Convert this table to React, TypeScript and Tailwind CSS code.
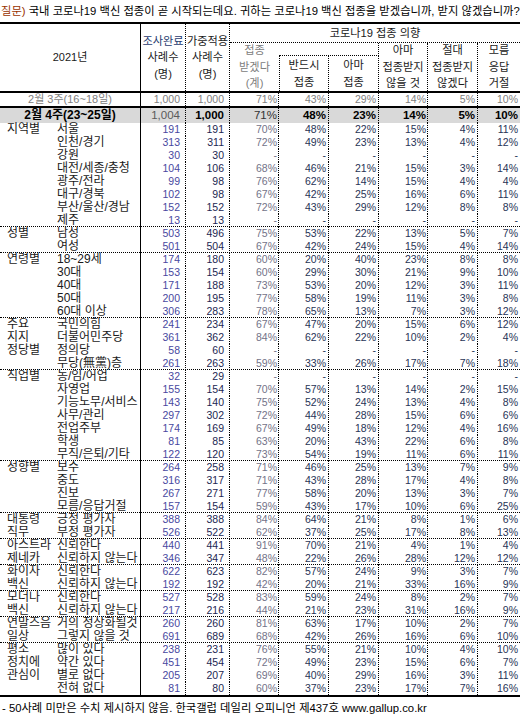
const COLS = "grid grid-cols-[141px_45px_44px_49px_50px_50px_49px_50px_42px]";

// [group label, item label, 조사완료, 가중적용, 계, 반드시, 아마, 아마않, 절대, 모름]
const groups: string[][][] = [
  [
    ["지역별", "서울", "191", "191", "70%", "48%", "22%", "15%", "4%", "11%"],
    ["", "인천/경기", "313", "311", "72%", "49%", "23%", "13%", "4%", "12%"],
    ["", "강원", "30", "30", "-", "-", "-", "-", "-", "-"],
    ["", "대전/세종/충청", "104", "106", "68%", "46%", "21%", "15%", "3%", "14%"],
    ["", "광주/전라", "99", "98", "76%", "62%", "14%", "15%", "4%", "4%"],
    ["", "대구/경북", "102", "98", "67%", "42%", "25%", "16%", "6%", "11%"],
    ["", "부산/울산/경남", "152", "152", "72%", "43%", "29%", "12%", "8%", "8%"],
    ["", "제주", "13", "13", "-", "-", "-", "-", "-", "-"],
  ],
  [
    ["성별", "남성", "503", "496", "75%", "53%", "22%", "13%", "5%", "7%"],
    ["", "여성", "501", "504", "67%", "42%", "24%", "15%", "4%", "14%"],
  ],
  [
    ["연령별", "18~29세", "174", "180", "60%", "20%", "40%", "23%", "8%", "8%"],
    ["", "30대", "153", "154", "60%", "29%", "30%", "21%", "9%", "10%"],
    ["", "40대", "171", "188", "73%", "53%", "20%", "12%", "3%", "11%"],
    ["", "50대", "200", "195", "77%", "58%", "19%", "11%", "3%", "8%"],
    ["", "60대 이상", "306", "283", "78%", "65%", "13%", "7%", "3%", "12%"],
  ],
  [
    ["주요", "국민의힘", "241", "234", "67%", "47%", "20%", "15%", "6%", "12%"],
    ["지지", "더불어민주당", "361", "362", "84%", "62%", "22%", "10%", "2%", "4%"],
    ["정당별", "정의당", "58", "60", "-", "-", "-", "-", "-", "-"],
    ["", "무당(無黨)층", "261", "263", "59%", "33%", "26%", "17%", "7%", "18%"],
  ],
  [
    ["직업별", "농/임/어업", "32", "29", "-", "-", "-", "-", "-", "-"],
    ["", "자영업", "155", "154", "70%", "57%", "13%", "14%", "2%", "15%"],
    ["", "기능노무/서비스", "143", "140", "75%", "52%", "24%", "13%", "4%", "8%"],
    ["", "사무/관리", "297", "302", "72%", "44%", "28%", "15%", "6%", "6%"],
    ["", "전업주부", "174", "169", "67%", "49%", "18%", "12%", "4%", "16%"],
    ["", "학생", "81", "85", "63%", "20%", "43%", "22%", "6%", "8%"],
    ["", "무직/은퇴/기타", "122", "120", "73%", "54%", "19%", "11%", "6%", "11%"],
  ],
  [
    ["성향별", "보수", "264", "258", "71%", "46%", "25%", "13%", "7%", "9%"],
    ["", "중도", "316", "317", "71%", "43%", "28%", "17%", "4%", "8%"],
    ["", "진보", "267", "271", "77%", "58%", "20%", "13%", "3%", "7%"],
    ["", "모름/응답거절", "157", "154", "59%", "43%", "17%", "10%", "6%", "25%"],
  ],
  [
    ["대통령", "긍정 평가자", "388", "388", "84%", "64%", "21%", "8%", "1%", "6%"],
    ["직무", "부정 평가자", "526", "522", "62%", "37%", "25%", "17%", "8%", "13%"],
  ],
  [
    ["아스트라", "신뢰한다", "440", "441", "91%", "70%", "21%", "4%", "1%", "4%"],
    ["제네카", "신뢰하지 않는다", "346", "347", "48%", "22%", "26%", "28%", "12%", "12%"],
  ],
  [
    ["화이자", "신뢰한다", "622", "623", "82%", "57%", "24%", "9%", "3%", "7%"],
    ["백신", "신뢰하지 않는다", "192", "192", "42%", "20%", "21%", "33%", "16%", "9%"],
  ],
  [
    ["모더나", "신뢰한다", "527", "528", "83%", "59%", "24%", "8%", "2%", "7%"],
    ["백신", "신뢰하지 않는다", "217", "216", "44%", "21%", "23%", "31%", "16%", "9%"],
  ],
  [
    ["연말즈음", "거의 정상화될것", "260", "260", "81%", "63%", "17%", "10%", "2%", "7%"],
    ["일상", "그렇지 않을 것", "691", "689", "68%", "42%", "26%", "16%", "6%", "10%"],
  ],
  [
    ["평소", "많이 있다", "238", "231", "76%", "55%", "21%", "10%", "4%", "10%"],
    ["정치에", "약간 있다", "451", "454", "72%", "49%", "23%", "15%", "6%", "7%"],
    ["관심이", "별로 없다", "205", "207", "69%", "40%", "29%", "16%", "3%", "11%"],
    ["", "전혀 없다", "81", "80", "60%", "37%", "23%", "17%", "7%", "16%"],
  ],
];

const DOT = "border-r border-dotted border-black";

function DataRow({ r, sep }: { r: string[]; sep: boolean }) {
  const [g, label, n1, n2, ...v] = r;
  return (
    <div className={`${COLS} h-[13px] text-[10.5px] leading-[13px] ${sep ? "border-b border-dotted border-black" : ""}`}>
      <div className="flex border-r border-black text-[12px] text-[#1a1a1a]">
        <span className="w-[57px] shrink-0 whitespace-nowrap pl-[7px]">{g}</span>
        <span className="whitespace-nowrap">{label}</span>
      </div>
      <div className={`${DOT} pr-[5px] text-right text-[#4848a0]`}>{n1}</div>
      <div className={`${DOT} pr-[5px] text-right text-[#1c2752]`}>{n2}</div>
      <div className={`${DOT} pr-[1px] text-right text-[#737388]`}>{v[0]}</div>
      <div className={`${DOT} pr-[2px] text-right text-[#283456]`}>{v[1]}</div>
      <div className={`${DOT} pr-[2px] text-right text-[#283456]`}>{v[2]}</div>
      <div className={`${DOT} pr-[1px] text-right text-[#283456]`}>{v[3]}</div>
      <div className={`${DOT} pr-[2px] text-right text-[#283456]`}>{v[4]}</div>
      <div className="pr-[2px] text-right text-[#283456]">{v[5]}</div>
    </div>
  );
}

function Header() {
  const cell = "flex flex-col items-center justify-center leading-[16.5px]";
  return (
    <div className={`${COLS} grid-rows-[19px_13px_35px] border-b-2 border-black text-[11.2px] text-[#1a1a1a]`}>
      <div className={`${cell} col-start-1 row-span-3 row-start-1 border-r border-black text-[11px]`}>2021년</div>
      <div className={`${cell} col-start-2 row-span-3 row-start-1 ${DOT}`}>
        <span className="text-[#1f3b6f]">조사완료</span>
        <span>사례수</span>
        <span>(명)</span>
      </div>
      <div className={`${cell} col-start-3 row-span-3 row-start-1 ${DOT}`}>
        <span>가중적용</span>
        <span>사례수</span>
        <span>(명)</span>
      </div>
      <div className={`${cell} col-span-6 col-start-4 row-start-1 border-b border-dotted border-black`}>
        코로나19 접종 의향
      </div>
      <div className={`${cell} col-start-4 row-span-2 row-start-2 text-[#808080]`}>
        <span>접종</span>
        <span>받겠다</span>
        <span>(계)</span>
      </div>
      <div className="col-span-2 col-start-5 row-start-2 border-r border-b border-dotted border-black" />
      <div className={`${cell} col-start-5 row-start-3 border-l ${DOT}`}>
        <span>반드시</span>
        <span>접종</span>
      </div>
      <div className={`${cell} col-start-6 row-start-3 ${DOT}`}>
        <span>아마</span>
        <span>접종</span>
      </div>
      <div className={`${cell} col-start-7 row-span-2 row-start-2 ${DOT}`}>
        <span>아마</span>
        <span>접종받지</span>
        <span>않을 것</span>
      </div>
      <div className={`${cell} col-start-8 row-span-2 row-start-2 ${DOT}`}>
        <span>절대</span>
        <span>접종받지</span>
        <span>않겠다</span>
      </div>
      <div className={`${cell} col-start-9 row-span-2 row-start-2`}>
        <span>모름</span>
        <span>응답</span>
        <span>거절</span>
      </div>
    </div>
  );
}

export default function App() {
  return (
    <div className="min-h-[717px] w-[525px] bg-white font-['Liberation_Sans','Noto_Sans_CJK_KR',sans-serif] text-black">
      <div className="h-[22px] whitespace-nowrap pl-[1px] pt-[3px] text-[11.3px] leading-[16px]">
        <span className="text-[#993300]">질문)</span> 국내 코로나19 백신 접종이 곧 시작되는데요. 귀하는 코로나19 백신 접종을
        받겠습니까, 받지 않겠습니까?
      </div>

      <div className="w-[520px] border-t-2 border-b-2 border-black">
        <Header />

        <div className={`${COLS} h-[15px] border-b-2 border-black text-[10.5px] leading-[13px] text-[#808080]`}>
          <div className="border-r border-black text-center text-[11px]">2월 3주(16~18일)</div>
          <div className={`${DOT} pr-[5px] text-right`}>1,000</div>
          <div className={`${DOT} pr-[5px] text-right`}>1,000</div>
          <div className={`${DOT} pr-[1px] text-right`}>71%</div>
          <div className={`${DOT} pr-[2px] text-right`}>43%</div>
          <div className={`${DOT} pr-[2px] text-right`}>29%</div>
          <div className={`${DOT} pr-[1px] text-right`}>14%</div>
          <div className={`${DOT} pr-[2px] text-right`}>5%</div>
          <div className="pr-[2px] text-right">10%</div>
        </div>

        <div className={`${COLS} h-[15px] bg-[#d9d9d9] text-[11.5px] leading-[15px] text-black`}>
          <div className="border-r border-black text-center text-[12px] font-bold">2월 4주(23~25일)</div>
          <div className={`${DOT} pr-[5px] text-right text-[#5a5a5a]`}>1,004</div>
          <div className={`${DOT} pr-[5px] text-right font-bold`}>1,000</div>
          <div className={`${DOT} pr-[1px] text-right text-[#333]`}>71%</div>
          <div className={`${DOT} pr-[2px] text-right font-bold`}>48%</div>
          <div className={`${DOT} pr-[2px] text-right font-bold`}>23%</div>
          <div className={`${DOT} pr-[1px] text-right font-bold`}>14%</div>
          <div className={`${DOT} pr-[2px] text-right font-bold`}>5%</div>
          <div className="pr-[2px] text-right font-bold">10%</div>
        </div>

        {groups.map((rows, gi) =>
          rows.map((r, ri) => (
            <DataRow key={`${gi}-${ri}`} r={r} sep={ri === rows.length - 1 && gi < groups.length - 1} />
          ))
        )}
      </div>

      <div className="whitespace-nowrap pl-[2px] pt-[4px] text-[11.3px] leading-[14px]">
        - 50사례 미만은 수치 제시하지 않음. 한국갤럽 데일리 오피니언 제437호 www.gallup.co.kr
      </div>
    </div>
  );
}
